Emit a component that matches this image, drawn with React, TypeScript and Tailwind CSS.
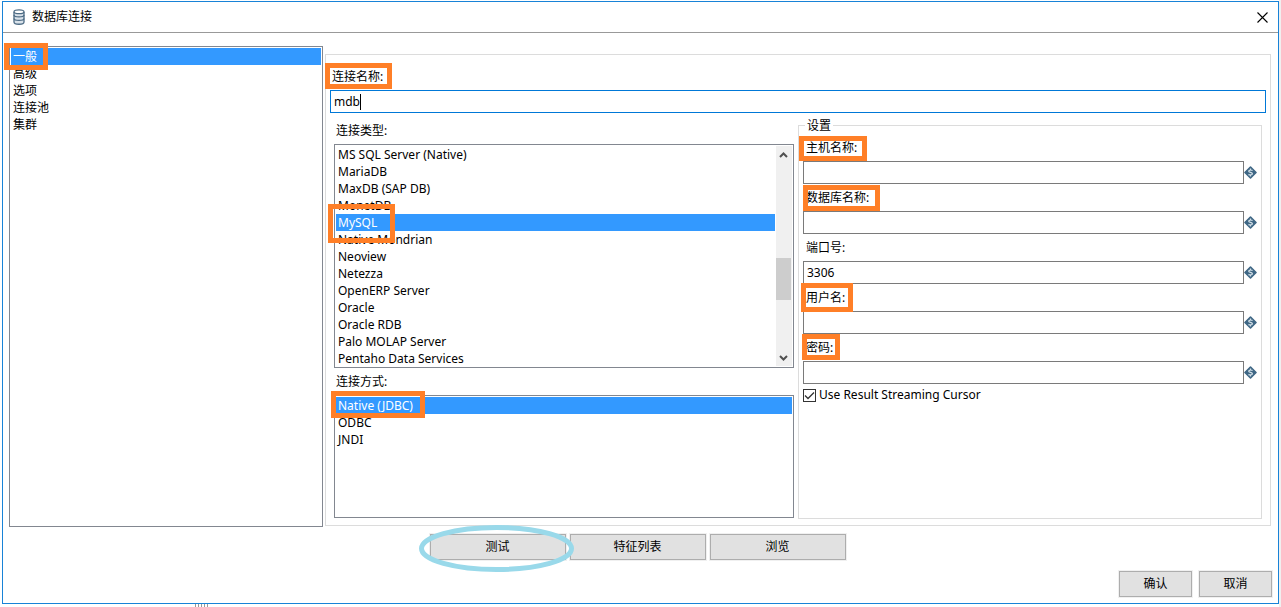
import { useState, type ReactNode } from "react";

const sections = ["一般", "高级", "选项", "连接池", "集群"];

const databaseTypes = [
  "MS SQL Server (Native)",
  "MariaDB",
  "MaxDB (SAP DB)",
  "MonetDB",
  "MySQL",
  "Native Mondrian",
  "Neoview",
  "Netezza",
  "OpenERP Server",
  "Oracle",
  "Oracle RDB",
  "Palo MOLAP Server",
  "Pentaho Data Services",
];

const accessMethods = ["Native (JDBC)", "ODBC", "JNDI"];

const settings = [
  { id: "host", label: "主机名称:", value: "", mark: "-left-1 top-[2px] h-[25px] w-[68px]" },
  { id: "database", label: "数据库名称:", value: "", mark: "left-0 top-px h-[26px] w-[77px]" },
  { id: "port", label: "端口号:", value: "3306", mark: "" },
  { id: "user", label: "用户名:", value: "", mark: "-left-[2px] -top-px h-[29px] w-[52px]" },
  { id: "password", label: "密码:", value: "", mark: "-left-px top-0 h-[26px] w-[38px]" },
];

function Mark({ className }: { className: string }) {
  return (
    <span
      aria-hidden="true"
      className={`pointer-events-none absolute z-10 border-5 border-[#ff7f27] ${className}`}
    />
  );
}

type ListBoxProps = {
  label: string;
  items: string[];
  value: string;
  onChange: (value: string) => void;
  mark: string;
  className: string;
  children?: ReactNode;
};

function ListBox({ label, items, value, onChange, mark, className, children }: ListBoxProps) {
  return (
    <div className={`flex border border-[#828790] bg-white ${className}`}>
      <ul role="listbox" aria-label={label} className="min-w-0 flex-1 p-px">
        {items.map((item) => (
          <li
            key={item}
            role="option"
            aria-selected={item === value}
            onClick={() => onChange(item)}
            className={`relative h-[17px] px-[2px] leading-[17px] whitespace-nowrap ${
              item === value ? "bg-[#3399ff] text-white" : "text-black"
            }`}
          >
            {item}
            {item === value && <Mark className={mark} />}
          </li>
        ))}
      </ul>
      {children}
    </div>
  );
}

function ScrollBar() {
  return (
    <div aria-hidden="true" className="my-px mr-px flex w-4 flex-col items-center bg-[#f0f0f0]">
      <svg viewBox="0 0 16 17" className="h-[17px] w-4" fill="none" stroke="#505050" strokeWidth="2">
        <path d="M4 11 7.500 7.500 11 11" />
      </svg>
      <div className="flex w-full flex-1 flex-col">
        <div className="flex-[96]" />
        <div className="h-[42px] w-[15px] bg-[#cdcdcd]" />
        <div className="flex-[49]" />
      </div>
      <svg viewBox="0 0 16 17" className="h-[17px] w-4" fill="none" stroke="#505050" strokeWidth="2">
        <path d="M4 7l3.500 3.500L11 7" />
      </svg>
    </div>
  );
}

function VariableIcon() {
  return (
    <svg viewBox="0 0 13 13" className="h-[13px] w-[13px] shrink-0" aria-hidden="true">
      <path
        d="M6.500 1 12 6.500 6.500 12 1 6.500Z"
        fill="#3f6785"
        stroke="#3f6785"
        strokeWidth="1.600"
        strokeLinejoin="round"
      />
      <path
        d="M8.500 4.600C7.900 3.800 4.700 3.700 4.700 5.200 4.700 6.700 8.400 6.200 8.400 7.800 8.400 9.300 5.100 9.200 4.500 8.300M6.500 2.500V4M6.500 9V10.500"
        fill="none"
        stroke="#d5e2ea"
        strokeWidth="1.200"
      />
    </svg>
  );
}

function DatabaseIcon() {
  return (
    <svg viewBox="0 0 12 16" className="h-4 w-3" fill="none" stroke="#4d6b84" aria-hidden="true">
      <path d="M1 3v10c0 3 10 3 10 0V3" fill="#d9e2ea" strokeWidth="1.300" />
      <ellipse cx="6" cy="2.700" rx="5" ry="1.900" fill="#fff" strokeWidth="1.300" />
      <path d="M1 6c0 2.500 10 2.500 10 0M1 9.500c0 2.500 10 2.500 10 0" strokeWidth="1.300" />
    </svg>
  );
}

function Button({ children, className }: { children: ReactNode; className: string }) {
  return (
    <button
      type="button"
      className={`h-[26px] border border-[#adadad] bg-[#e1e1e1] outline outline-[#f0f0f0] ${className}`}
    >
      {children}
    </button>
  );
}

export default function App() {
  const [section, setSection] = useState("一般");
  const [type, setType] = useState("MySQL");
  const [method, setMethod] = useState("Native (JDBC)");

  return (
    <div className="flex min-h-screen flex-col border-r-2 border-[#f0f0f0] bg-white pt-px pl-[2px] font-['Noto_Sans','Noto_Sans_CJK_SC',sans-serif] text-[12px] leading-4 text-black">
      <main className="flex flex-1 flex-col border border-[#1883d7] bg-white">
        <header className="flex h-[31px] items-center border-b border-[#999] pr-[6px] pl-[10px]">
          <DatabaseIcon />
          <h1 className="ml-[7px] flex-1">数据库连接</h1>
          <button type="button" aria-label="关闭" className="p-1">
            <svg viewBox="0 0 11 11" className="h-[11px] w-[11px]" stroke="#000" strokeWidth="1.100">
              <path d="M0.500 0.500 10.500 10.500M10.500 0.500 0.500 10.500" />
            </svg>
          </button>
        </header>

        <div className="flex flex-1 gap-[2px] pt-[13px] pr-[7px] pl-[6px]">
          <ListBox
            label="数据库连接"
            items={sections}
            value={section}
            onChange={setSection}
            mark="-top-[5px] -left-[7px] h-[27px] w-[44px]"
            className="w-[314px] shrink-0"
          />

          <section className="mt-2 mb-px flex min-w-0 flex-1 flex-col border border-[#dcdcdc] px-1 pt-2">
            <label htmlFor="name" className="relative flex h-[27px] items-center pl-[2px]">
              连接名称:
              <Mark className="top-0 -left-[5px] h-[26px] w-[67px]" />
            </label>
            <div className="flex h-[23px] items-center border border-[#0078d7] pl-[3px]">
              <input id="name" defaultValue="mdb" className="field-sizing-content outline-none" />
              <span aria-hidden="true" className="h-4 w-px bg-black" />
            </div>

            <div className="grid flex-1 grid-cols-[115fr_116fr] gap-1 pt-[5px] pr-1 pl-1">
              <div className="flex min-w-0 flex-col">
                <p className="flex h-[26px] items-center pl-[2px]">连接类型:</p>
                <ListBox
                  label="连接类型"
                  items={databaseTypes}
                  value={type}
                  onChange={setType}
                  mark="-top-[10px] -left-2 h-[39px] w-[67px]"
                  className="h-[224px]"
                >
                  <ScrollBar />
                </ListBox>
                <p className="flex h-[27px] items-center pl-[2px]">连接方式:</p>
                <ListBox
                  label="连接方式"
                  items={accessMethods}
                  value={method}
                  onChange={setMethod}
                  mark="-top-[6px] -left-[5px] h-[27px] w-[94px]"
                  className="mb-[7px] flex-1"
                />
              </div>

              <fieldset className="mb-[6px] min-w-0 border border-[#dcdcdc] pt-[2px] pl-1">
                <legend className="ml-[2px] h-[14px] px-[2px] leading-4">设置</legend>
                {settings.map((field) => (
                  <div key={field.id}>
                    <label htmlFor={field.id} className="relative flex h-[27px] items-center pl-[3px]">
                      {field.label}
                      {field.mark && <Mark className={field.mark} />}
                    </label>
                    <div className="flex items-center pr-1">
                      <input
                        id={field.id}
                        type={field.id === "password" ? "password" : "text"}
                        defaultValue={field.value}
                        className="h-[23px] min-w-0 flex-1 border border-[#7a7a7a] px-[3px] outline-none"
                      />
                      <VariableIcon />
                    </div>
                  </div>
                ))}
                <label className="mt-[3px] flex items-center gap-[3px]">
                  <input
                    type="checkbox"
                    defaultChecked
                    className="peer h-[13px] w-[13px] appearance-none border border-[#333] bg-white"
                  />
                  <svg
                    viewBox="0 0 13 13"
                    className="invisible -ml-4 h-[13px] w-[13px] peer-checked:visible"
                    fill="none"
                    stroke="#333"
                    strokeWidth="1.300"
                    aria-hidden="true"
                  >
                    <path d="M2 6.500 5 9.500 11 3.500" />
                  </svg>
                  Use Result Streaming Cursor
                </label>
              </fieldset>
            </div>
          </section>
        </div>

        <div className="flex justify-center gap-1 pt-[7px] pr-[6px]">
          <Button className="relative z-10 w-[136px]">
            测试
            <svg
              viewBox="0 0 155 47"
              className="pointer-events-none absolute -top-[10px] -left-3 h-[47px] w-[155px] max-w-none"
              fill="none"
              stroke="#99d9ea"
              strokeWidth="5"
              aria-hidden="true"
            >
              <ellipse cx="77.500" cy="23.500" rx="75" ry="21" />
            </svg>
          </Button>
          <Button className="w-[136px]">特征列表</Button>
          <Button className="w-[136px]">浏览</Button>
        </div>
        <div className="flex justify-end gap-[7px] pt-[11px] pr-[6px] pb-[6px]">
          <Button className="w-[73px]">确认</Button>
          <Button className="w-[73px]">取消</Button>
        </div>
      </main>

      {/* splitter grip of the window behind */}
      <div aria-hidden="true" className="flex h-[3px] gap-[2px] pl-[193px]">
        <span className="w-px bg-[#999]" />
        <span className="w-px bg-[#999]" />
        <span className="w-px bg-[#999]" />
        <span className="w-px bg-[#999]" />
        <span className="w-px bg-[#999]" />
      </div>
    </div>
  );
}
